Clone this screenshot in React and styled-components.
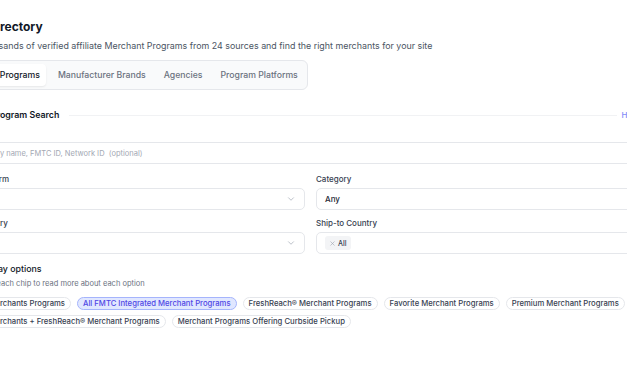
import React from 'react';
import styled, { createGlobalStyle } from 'styled-components';
import { ChevronDown, Search, BookOpen, X } from 'lucide-react';

const GlobalStyle = createGlobalStyle`
  html, body {
    margin: 0;
    padding: 0;
    background: #ffffff;
  }
  body {
    font-family: Inter, "Noto Sans", sans-serif;
    color: #111827;
    -webkit-font-smoothing: antialiased;
  }
`;

const Viewport = styled.div`
  width: 627px;
  height: 376px;
  overflow: hidden;
  background: #ffffff;
`;

const Content = styled.div`
  width: 667px;
  margin-left: -23px;
  padding-top: 18px;
  display: flex;
  flex-direction: column;
`;

const TitleRow = styled.h1`
  margin: 0;
  display: flex;
  align-items: center;
  gap: 3px;
  font-size: 12px;
  line-height: 18px;
  font-weight: 700;
  color: #111827;
`;

const Subtitle = styled.p`
  margin: 3px 0 0;
  font-size: 8.9px;
  line-height: 14px;
  color: #4b5563;
`;

const Tabs = styled.div`
  align-self: flex-start;
  margin-top: 7px;
  display: flex;
  gap: 6px;
  padding: 3px;
  border: 1px solid #e5e7eb;
  border-radius: 6px;
  background: #f9fafb;
`;

const Tab = styled.button`
  height: 22px;
  padding: 0 6px;
  border: 0;
  border-radius: 4px;
  font-family: inherit;
  font-size: 8.7px;
  font-weight: 500;
  color: ${p => (p.$active ? '#111827' : '#6b7280')};
  background: ${p => (p.$active ? '#ffffff' : 'transparent')};
  box-shadow: ${p => (p.$active ? '0 1px 2px rgba(0,0,0,0.08)' : 'none')};
`;

const SectionHead = styled.div`
  margin-top: 19px;
  display: flex;
  align-items: center;
  gap: 4px;
`;

const SectionTitle = styled.h2`
  margin: 0;
  display: flex;
  align-items: center;
  gap: 4px;
  font-size: 8.8px;
  line-height: 12px;
  font-weight: 600;
  color: #111827;
  white-space: nowrap;
`;

const Rule = styled.div`
  flex: 1;
  height: 1px;
  margin-left: 6px;
  background: #f1f2f4;
`;

const HideLink = styled.a`
  font-size: 8px;
  font-weight: 500;
  color: #818cf8;
  padding-right: 5px;
`;

const SearchBox = styled.div`
  margin-top: 21px;
  height: 22px;
  box-sizing: border-box;
  border: 1px solid #e5e7eb;
  border-radius: 5px;
  display: flex;
  align-items: center;
  gap: 3px;
  padding: 0 6px;
  font-size: 7.5px;
  color: #a3a8b3;
  white-space: pre;
`;

const Grid = styled.div`
  margin-top: 9px;
  display: grid;
  grid-template-columns: 1fr 1fr;
  column-gap: 11px;
  row-gap: 7px;
`;

const Field = styled.div`
  display: flex;
  flex-direction: column;
  gap: 3px;
`;

const Label = styled.label`
  font-size: 8px;
  line-height: 12px;
  font-weight: 500;
  color: #374151;
`;

const Select = styled.div`
  height: 22px;
  box-sizing: border-box;
  border: 1px solid #e5e7eb;
  border-radius: 5px;
  display: flex;
  align-items: center;
  justify-content: space-between;
  padding: 0 8px;
  font-size: 8px;
  font-weight: 500;
  color: #1f2937;
  svg {
    color: #9ca3af;
  }
`;

const Token = styled.span`
  display: inline-flex;
  align-items: center;
  gap: 2px;
  height: 14px;
  padding: 0 4px;
  border-radius: 3px;
  background: #f3f4f6;
  font-size: 7px;
  font-weight: 500;
  color: #374151;
  svg {
    color: #9ca3af;
  }
`;

const OptionsTitle = styled.h3`
  margin: 9px 0 0;
  font-size: 8.8px;
  line-height: 12px;
  font-weight: 500;
  color: #111827;
`;

const Hint = styled.p`
  margin: 3px 0 0;
  font-size: 7.5px;
  line-height: 12px;
  color: #6b7280;
`;

const Chips = styled.div`
  margin: 7px 0 0 -6px;
  display: flex;
  flex-wrap: wrap;
  gap: 5px 6px;
  width: 666px;
`;

const Chip = styled.span`
  height: 13px;
  box-sizing: border-box;
  display: inline-flex;
  align-items: center;
  padding: 0 5px;
  border-radius: 7px;
  border: 1px solid ${p => (p.$active ? '#a5b4fc' : '#e5e7eb')};
  background: ${p => (p.$active ? '#e0e7ff' : '#ffffff')};
  color: ${p => (p.$active ? '#4f46e5' : '#374151')};
  font-size: 7.7px;
  font-weight: 500;
  white-space: nowrap;
`;

const tabs = ['All Programs', 'Manufacturer Brands', 'Agencies', 'Program Platforms'];

const chips = [
  'All Merchants Programs',
  'All FMTC Integrated Merchant Programs',
  'FreshReach® Merchant Programs',
  'Favorite Merchant Programs',
  'Premium Merchant Programs',
  'All Merchants + FreshReach® Merchant Programs',
  'Merchant Programs Offering Curbside Pickup',
];

export default function App() {
  return (
    <Viewport>
      <GlobalStyle />
      <Content>
        <TitleRow>
          <BookOpen size={8} strokeWidth={2} />
          Directory
        </TitleRow>
        <Subtitle>
          Thousands of verified affiliate Merchant Programs from 24 sources and find the right merchants for your site
        </Subtitle>

        <Tabs>
          {tabs.map((t, i) => (
            <Tab key={t} $active={i === 0}>{t}</Tab>
          ))}
        </Tabs>

        <SectionHead>
          <SectionTitle>
            <Search size={10} strokeWidth={2} />
            Program Search
          </SectionTitle>
          <Rule />
          <HideLink>Hide</HideLink>
        </SectionHead>

        <SearchBox>
          <Search size={8} strokeWidth={2} />
          By name, FMTC ID, Network ID  (optional)
        </SearchBox>

        <Grid>
          <Field>
            <Label>Platform</Label>
            <Select>
              <span />
              <ChevronDown size={10} strokeWidth={1.6} />
            </Select>
          </Field>
          <Field>
            <Label>Category</Label>
            <Select>
              <span>Any</span>
            </Select>
          </Field>
          <Field>
            <Label>Country</Label>
            <Select>
              <span />
              <ChevronDown size={10} strokeWidth={1.6} />
            </Select>
          </Field>
          <Field>
            <Label>Ship-to Country</Label>
            <Select>
              <Token>
                <X size={7} strokeWidth={2} />
                All
              </Token>
            </Select>
          </Field>
        </Grid>

        <OptionsTitle>Display options</OptionsTitle>
        <Hint>Click each chip to read more about each option</Hint>

        <Chips>
          {chips.map((c, i) => (
            <Chip key={c} $active={i === 1}>{c}</Chip>
          ))}
        </Chips>
      </Content>
    </Viewport>
  );
}
